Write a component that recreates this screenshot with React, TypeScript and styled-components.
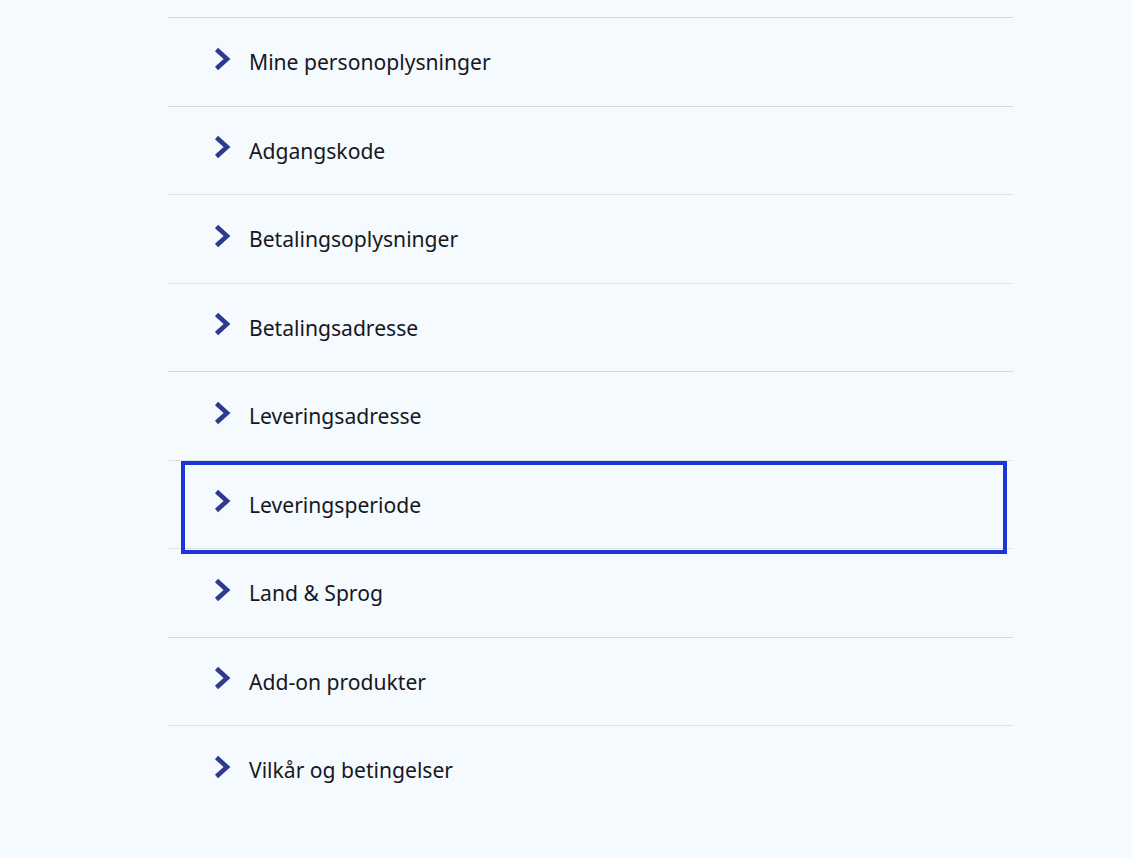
import styled, { createGlobalStyle } from 'styled-components';

const GlobalStyle = createGlobalStyle`
  html, body {
    margin: 0;
    padding: 0;
    background: #f5faff;
  }
  body {
    font-family: 'Noto Sans', 'Lato', sans-serif;
    color: #16181d;
  }
`;

const Page = styled.div`
  min-height: 858px;
  background: #f5faff;
  padding-top: 17px;
  box-sizing: border-box;
`;

const List = styled.ul`
  list-style: none;
  margin: 0 0 0 168px;
  padding: 0;
  width: 845px;
`;

const Item = styled.li<{ $strong: boolean }>`
  position: relative;
  height: 88.5px;
  box-sizing: border-box;
  border-top: 1px solid ${(p) => (p.$strong ? '#d3d7dc' : '#dde1e5')};
`;

const Header = styled.button`
  display: flex;
  align-items: center;
  gap: 18px;
  width: 826px;
  height: 100%;
  margin: 0 0 0 13px;
  padding: 0 0 0 33px;
  border: 0;
  background: transparent;
  font-family: inherit;
  font-size: 21.1px;
  color: inherit;
  text-align: left;
  cursor: pointer;
  outline: none;
`;

const FocusRing = styled.span`
  position: absolute;
  z-index: 2;
  top: 0;
  left: 13px;
  width: 826px;
  height: 93px;
  box-sizing: border-box;
  border: 4px solid #1b35d8;
  pointer-events: none;
`;

const Chevron = styled.svg`
  flex: none;
  width: 17px;
  height: 24px;
  margin-top: -6px;
`;

const Label = styled.span`
  line-height: 1;
`;

const items = [
  'Mine personoplysninger',
  'Adgangskode',
  'Betalingsoplysninger',
  'Betalingsadresse',
  'Leveringsadresse',
  'Leveringsperiode',
  'Land & Sprog',
  'Add-on produkter',
  'Vilkår og betingelser',
];

const strongRows = [0, 1, 4, 7];

const App = (): JSX.Element => (
  <Page>
    <GlobalStyle />
    <List>
      {items.map((label, i) => (
        <Item key={label} $strong={strongRows.includes(i)}>
          <Header type="button">
            <Chevron viewBox="0 0 17 24" aria-hidden="true">
              <path
                d="M2.5 2.5 L13 12 L2.5 21.5"
                fill="none"
                stroke="#2d3a8e"
                strokeWidth="4.6"
                strokeLinejoin="miter"
              />
            </Chevron>
            <Label>{label}</Label>
          </Header>
          {label === 'Leveringsperiode' && <FocusRing />}
        </Item>
      ))}
    </List>
  </Page>
);

export default App;
